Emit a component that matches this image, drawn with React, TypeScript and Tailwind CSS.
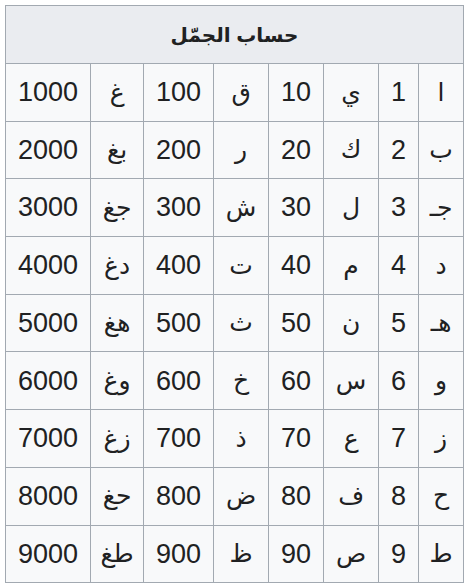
const rows: string[][] = [
  ["ا", "1", "ي", "10", "ق", "100", "غ", "1000"],
  ["ب", "2", "ك", "20", "ر", "200", "بغ", "2000"],
  ["جـ", "3", "ل", "30", "ش", "300", "جغ", "3000"],
  ["د", "4", "م", "40", "ت", "400", "دغ", "4000"],
  ["هـ", "5", "ن", "50", "ث", "500", "هغ", "5000"],
  ["و", "6", "س", "60", "خ", "600", "وغ", "6000"],
  ["ز", "7", "ع", "70", "ذ", "700", "زغ", "7000"],
  ["ح", "8", "ف", "80", "ض", "800", "حغ", "8000"],
  ["ط", "9", "ص", "90", "ظ", "900", "طغ", "9000"],
];

// column widths, right to left
const widths = ["w-[45px]", "w-[40px]", "w-[55px]", "w-[55px]", "w-[55px]", "w-[70px]", "w-[53px]", "w-[85px]"];

export default function App() {
  return (
    <div className="min-h-screen bg-white p-[5px] text-[#202122] font-['Liberation_Sans','DejaVu_Sans',sans-serif]">
      <table dir="rtl" className="table-fixed w-[457px] border-collapse border border-[#a2a9b1] bg-[#f8f9fa]">
        <colgroup>
          {widths.map((w, i) => (
            <col key={i} className={w} />
          ))}
        </colgroup>
        <thead>
          <tr className="h-[58px]">
            <th colSpan={8} className="border border-[#a2a9b1] bg-[#eaecf0] text-[20px] font-bold">
              حساب الجمّل
            </th>
          </tr>
        </thead>
        <tbody>
          {rows.map((row, r) => (
            <tr key={r} className="h-[57.7px]">
              {row.map((cell, c) => (
                <td
                  key={c}
                  className={`border border-[#a2a9b1] p-0 text-center ${c % 2 === 1 ? "text-[27px]" : "text-[25px]"}`}
                >
                  {cell}
                </td>
              ))}
            </tr>
          ))}
        </tbody>
      </table>
    </div>
  );
}
